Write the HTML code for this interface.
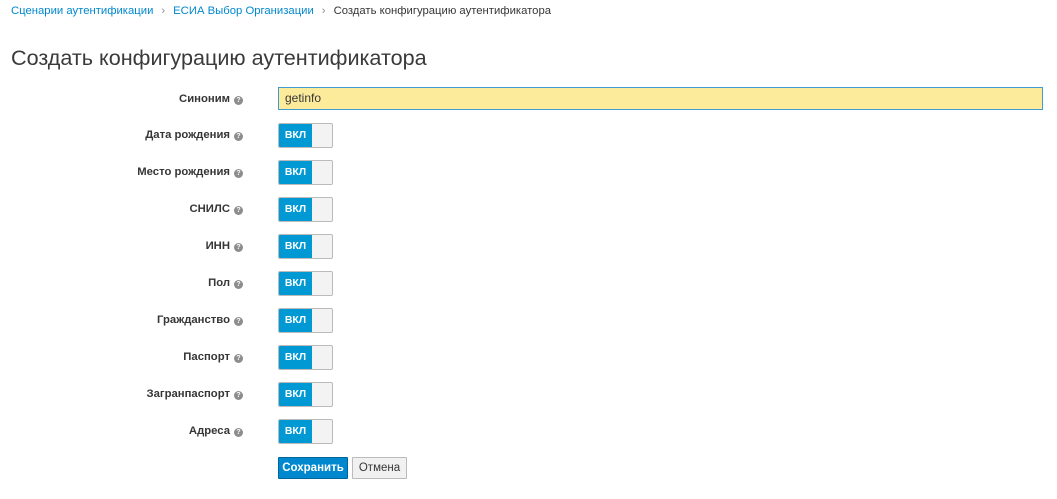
<!DOCTYPE html><html><head><style>
body{margin:0;background:#fff;font-family:"Liberation Sans",sans-serif;color:#363636;width:1057px;height:499px;overflow:hidden;position:relative}
.bc{position:absolute;left:11px;top:5px;font-size:11.3px;color:#363636}
.bc a{color:#0088ce}.bc .s{color:#8b8d8f;margin:0 8px}
h1{position:absolute;left:11px;top:45px;margin:0;font-size:21.6px;font-weight:normal;color:#3a3a3a}
.row{position:absolute;left:0;width:1057px;height:24px}
.lbl{position:absolute;right:814px;top:6px;font-size:11.3px;font-weight:bold;color:#363636;white-space:nowrap}
.q{display:inline-block;width:9px;height:9px;border-radius:50%;background:#8b8d8f;color:#fff;font-size:7px;line-height:9px;text-align:center;margin-left:4px;vertical-align:0}
.sw{position:absolute;left:278px;top:0;width:53px;height:23px;border:1px solid #bbb;border-radius:2px;background:#f3f3f3;overflow:hidden}
.sw b{position:absolute;left:0;top:0;width:33px;height:23px;background:#0099d3;color:#fff;font-size:10.5px;line-height:23px;text-align:center}
.inp{position:absolute;left:278px;top:87px;width:757px;height:21px;border:1px solid #3f9bd0;background:#fdeb9c;font-size:12px;line-height:21px;padding-left:6px;box-sizing:content-box}
.btn{position:absolute;top:457px;height:20px;font-size:11.5px;line-height:20px;text-align:center;border-radius:1px}
</style></head><body>
<div class="bc"><a>Сценарии аутентификации</a><span class="s">›</span><a>ЕСИА Выбор Организации</a><span class="s">›</span>Создать конфигурацию аутентификатора</div>
<h1>Создать конфигурацию аутентификатора</h1>
<div class="row" style="top:87px"><span class="lbl">Синоним<span class="q">?</span></span></div>
<div class="inp">getinfo</div>
<div class="row" style="top:123px"><span class="lbl">Дата рождения<span class="q">?</span></span><div class="sw"><b>ВКЛ</b></div></div>
<div class="row" style="top:160px"><span class="lbl">Место рождения<span class="q">?</span></span><div class="sw"><b>ВКЛ</b></div></div>
<div class="row" style="top:197px"><span class="lbl">СНИЛС<span class="q">?</span></span><div class="sw"><b>ВКЛ</b></div></div>
<div class="row" style="top:234px"><span class="lbl">ИНН<span class="q">?</span></span><div class="sw"><b>ВКЛ</b></div></div>
<div class="row" style="top:271px"><span class="lbl">Пол<span class="q">?</span></span><div class="sw"><b>ВКЛ</b></div></div>
<div class="row" style="top:308px"><span class="lbl">Гражданство<span class="q">?</span></span><div class="sw"><b>ВКЛ</b></div></div>
<div class="row" style="top:345px"><span class="lbl">Паспорт<span class="q">?</span></span><div class="sw"><b>ВКЛ</b></div></div>
<div class="row" style="top:382px"><span class="lbl">Загранпаспорт<span class="q">?</span></span><div class="sw"><b>ВКЛ</b></div></div>
<div class="row" style="top:419px"><span class="lbl">Адреса<span class="q">?</span></span><div class="sw"><b>ВКЛ</b></div></div>
<div class="btn" style="left:278px;width:68px;background:#0088ce;border:1px solid #00659c;color:#fff;font-weight:bold">Сохранить</div>
<div class="btn" style="left:352px;width:53px;background:#f1f1f1;border:1px solid #bbb;color:#363636">Отмена</div>
</body></html>
